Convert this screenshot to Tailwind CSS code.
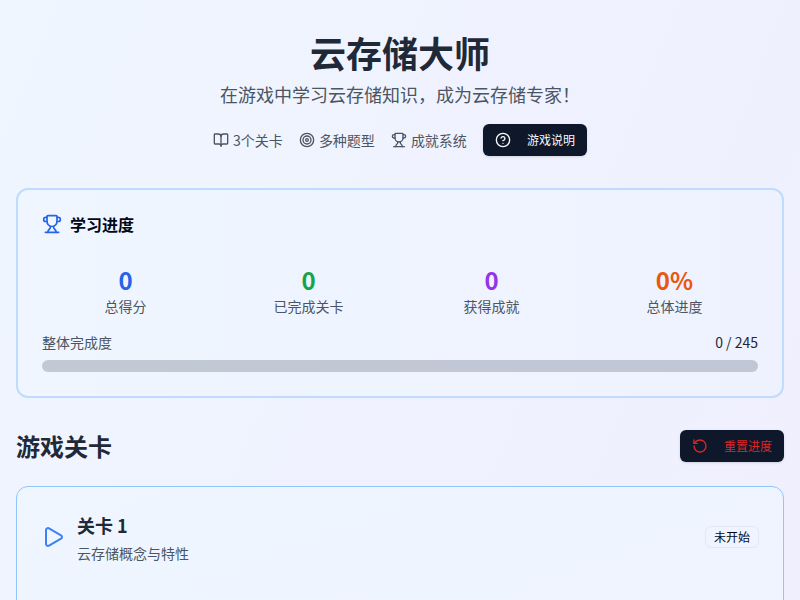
<!DOCTYPE html>
<html lang="zh-CN">
<head>
  <meta charset="UTF-8" />
  <meta name="viewport" content="width=device-width, initial-scale=1.0" />
  <title>云存储大师</title>
  <script src="https://cdn.jsdelivr.net/npm/@tailwindcss/browser@4"></script>
</head>
<body class="h-[600px] overflow-hidden font-['Noto_Sans_CJK_SC',sans-serif] text-[#020817]">
  <div class="h-[600px] overflow-hidden bg-linear-to-br from-[#eff6ff] to-[#f0ebfd] bg-[length:100%_2000px] bg-no-repeat px-4 pt-8">
    <!-- Header -->
    <header class="mb-8 text-center">
      <h1 class="mb-2 text-4xl leading-10 font-bold text-[#1f2937]">云存储大师</h1>
      <p class="text-lg leading-7 text-[#4b5563]">在游戏中学习云存储知识，成为云存储专家！</p>
      <div class="mt-4 flex items-center justify-center gap-4 text-sm text-[#4b5563]">
        <div class="flex items-center gap-1">
          <svg class="size-4" viewBox="0 0 24 24" fill="none" stroke="currentColor" stroke-width="2" stroke-linecap="round" stroke-linejoin="round"><path d="M12 7v14"/><path d="M3 18a1 1 0 0 1-1-1V4a1 1 0 0 1 1-1h5a4 4 0 0 1 4 4 4 4 0 0 1 4-4h5a1 1 0 0 1 1 1v13a1 1 0 0 1-1 1h-6a3 3 0 0 0-3 3 3 3 0 0 0-3-3z"/></svg>
          <span>3个关卡</span>
        </div>
        <div class="flex items-center gap-1">
          <svg class="size-4" viewBox="0 0 24 24" fill="none" stroke="currentColor" stroke-width="2"><circle cx="12" cy="12" r="10"/><circle cx="12" cy="12" r="6"/><circle cx="12" cy="12" r="2"/></svg>
          <span>多种题型</span>
        </div>
        <div class="flex items-center gap-1">
          <svg class="size-4" viewBox="0 0 24 24" fill="none" stroke="currentColor" stroke-width="2" stroke-linecap="round" stroke-linejoin="round"><path d="M10 14.66v1.626a2 2 0 0 1-.976 1.696A5 5 0 0 0 7 21.978"/><path d="M14 14.66v1.626a2 2 0 0 0 .976 1.696A5 5 0 0 1 17 21.978"/><path d="M18 9h1.5a1 1 0 0 0 0-5H18"/><path d="M4 22h16"/><path d="M6 9a6 6 0 0 0 12 0V3a1 1 0 0 0-1-1H7a1 1 0 0 0-1 1z"/><path d="M6 9H4.5a1 1 0 0 1 0-5H6"/></svg>
          <span>成就系统</span>
        </div>
        <button class="flex h-8 items-center gap-4 rounded-md bg-[#0f172a] px-3 text-xs font-normal text-[#f8fafc] shadow-sm">
          <svg class="size-4" viewBox="0 0 24 24" fill="none" stroke="currentColor" stroke-width="2" stroke-linecap="round" stroke-linejoin="round"><circle cx="12" cy="12" r="10"/><path d="M9.09 9a3 3 0 0 1 5.83 1c0 2-3 3-3 3"/><path d="M12 17h.01"/></svg>
          游戏说明
        </button>
      </div>
    </header>

    <!-- Progress -->
    <section class="mb-8 h-[210px] rounded-xl border-2 border-[#bfdbfe] bg-linear-to-r from-[#eff6ff] to-[#eef2ff] px-6 pt-6">
      <h2 class="flex h-5 items-center gap-2 font-semibold">
        <svg class="size-5 text-[#2563eb]" viewBox="0 0 24 24" fill="none" stroke="currentColor" stroke-width="2" stroke-linecap="round" stroke-linejoin="round"><path d="M10 14.66v1.626a2 2 0 0 1-.976 1.696A5 5 0 0 0 7 21.978"/><path d="M14 14.66v1.626a2 2 0 0 0 .976 1.696A5 5 0 0 1 17 21.978"/><path d="M18 9h1.5a1 1 0 0 0 0-5H18"/><path d="M4 22h16"/><path d="M6 9a6 6 0 0 0 12 0V3a1 1 0 0 0-1-1H7a1 1 0 0 0-1 1z"/><path d="M6 9H4.5a1 1 0 0 1 0-5H6"/></svg>
        学习进度
      </h2>
      <div class="mt-[30px] mb-4 grid grid-cols-4 gap-4 text-center">
        <div>
          <div class="text-2xl font-bold text-[#2563eb]">0</div>
          <div class="text-sm text-[#4b5563]">总得分</div>
        </div>
        <div>
          <div class="text-2xl font-bold text-[#16a34a]">0</div>
          <div class="text-sm text-[#4b5563]">已完成关卡</div>
        </div>
        <div>
          <div class="text-2xl font-bold text-[#9333ea]">0</div>
          <div class="text-sm text-[#4b5563]">获得成就</div>
        </div>
        <div>
          <div class="text-2xl font-bold text-[#ea580c]">0%</div>
          <div class="text-sm text-[#4b5563]">总体进度</div>
        </div>
      </div>
      <div class="mb-2 flex justify-between text-sm">
        <span class="text-[#4b5563]">整体完成度</span>
        <span class="text-[#1f2937]">0 / 245</span>
      </div>
      <div class="h-3 rounded-full bg-[#0f172a]/20"></div>
    </section>

    <!-- Levels -->
    <div class="mb-6 flex items-center justify-between">
      <h2 class="text-2xl font-bold text-[#1f2937]">游戏关卡</h2>
      <button class="flex h-8 items-center gap-4 rounded-md bg-[#0f172a] px-3 text-xs font-normal text-[#dc2626] shadow-sm">
        <svg class="size-4" viewBox="0 0 24 24" fill="none" stroke="currentColor" stroke-width="2" stroke-linecap="round" stroke-linejoin="round"><path d="M3 12a9 9 0 1 0 9-9 9.75 9.75 0 0 0-6.74 2.74L3 8"/><path d="M3 3v5h5"/></svg>
        重置进度
      </button>
    </div>
    <section class="h-[300px] rounded-xl border border-[#93c5fd] bg-linear-to-br from-[#eff6ff] to-[#eef2ff] p-6">
      <div class="flex items-center justify-between">
        <div class="flex items-center gap-3">
          <svg class="size-6 text-[#3b82f6]" viewBox="0 0 24 24" fill="none" stroke="currentColor" stroke-width="2" stroke-linecap="round" stroke-linejoin="round"><path d="M5 5a2 2 0 0 1 3.008-1.728l11.997 6.998a2 2 0 0 1 .003 3.458l-12 7A2 2 0 0 1 5 19z"/></svg>
          <div>
            <h3 class="text-lg font-bold text-[#1f2937]">关卡 1</h3>
            <p class="mt-1 text-sm text-[#4b5563]">云存储概念与特性</p>
          </div>
        </div>
        <span class="rounded-md border border-[#e2e8f0] px-2 py-0.5 text-xs font-normal">未开始</span>
      </div>
    </section>
  </div>
</body>
</html>
